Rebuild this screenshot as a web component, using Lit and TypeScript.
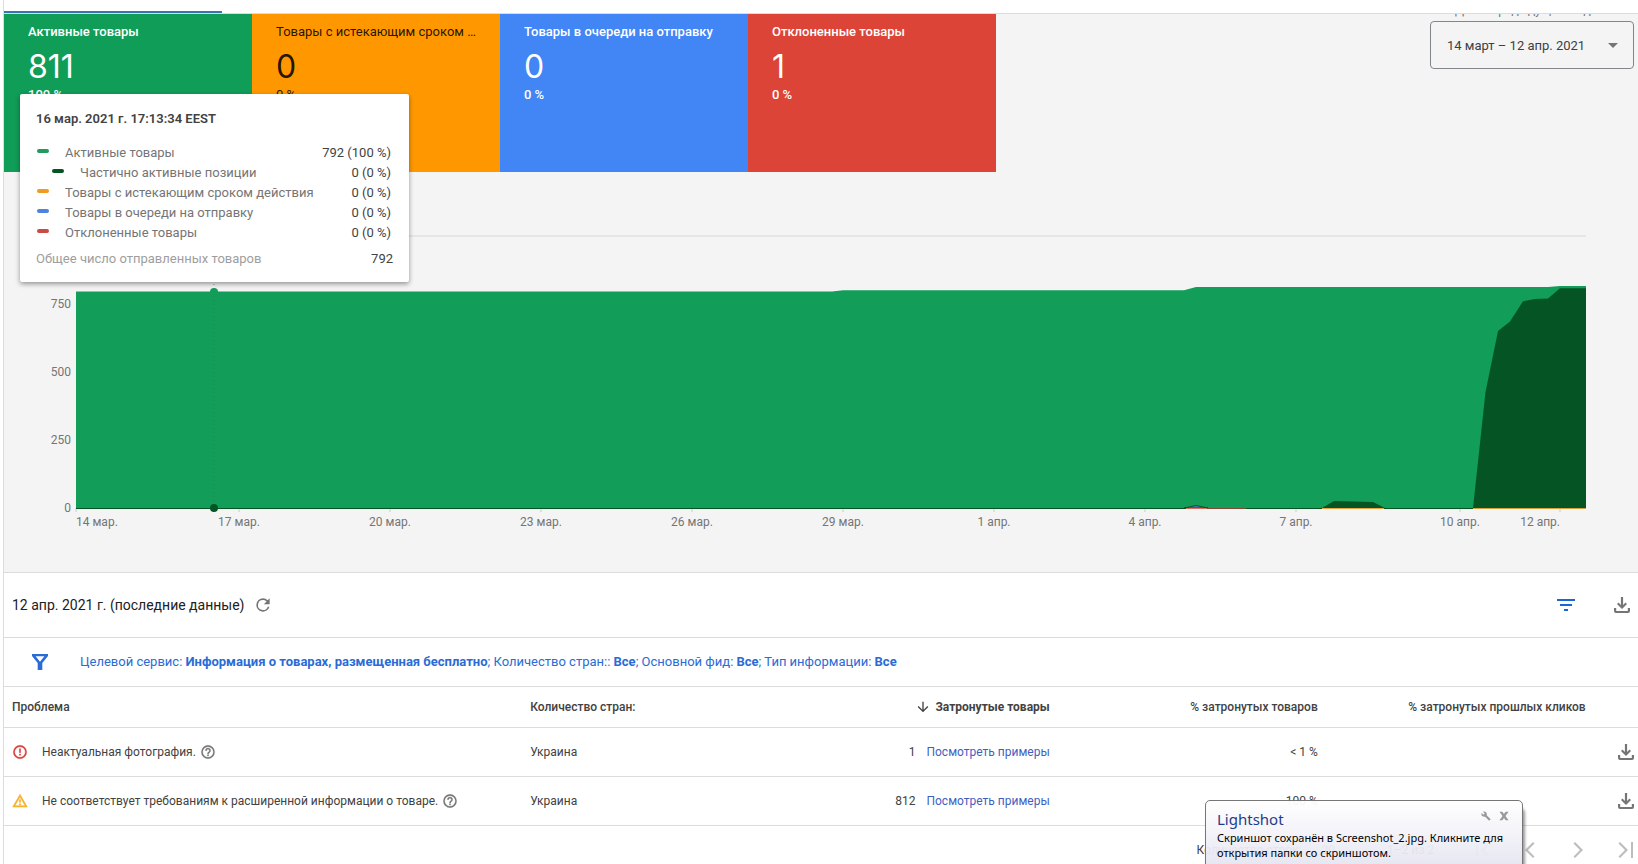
import { LitElement, html, css, svg } from "lit";
import { customElement, state } from "lit/decorators.js";

interface Tile { title: string; value: string; share: string; kind: string }
interface LegendRow { name: string; value: string; kind: string; nested?: boolean }
interface Issue { level: "error" | "warning"; name: string; country: string; count: string; share: string }

const TILES: Tile[] = [
  { title: "Активные товары", value: "811", share: "100 %", kind: "active" },
  { title: "Товары с истекающим сроком действия", value: "0", share: "0 %", kind: "expiring" },
  { title: "Товары в очереди на отправку", value: "0", share: "0 %", kind: "pending" },
  { title: "Отклоненные товары", value: "1", share: "0 %", kind: "disapproved" },
];

const LEGEND: LegendRow[] = [
  { name: "Активные товары", value: "792 (100 %)", kind: "active" },
  { name: "Частично активные позиции", value: "0 (0 %)", kind: "partial", nested: true },
  { name: "Товары с истекающим сроком действия", value: "0 (0 %)", kind: "expiring" },
  { name: "Товары в очереди на отправку", value: "0 (0 %)", kind: "pending" },
  { name: "Отклоненные товары", value: "0 (0 %)", kind: "disapproved" },
];

const ISSUES: Issue[] = [
  { level: "error", name: "Неактуальная фотография.", country: "Украина", count: "1", share: "< 1 %" },
  { level: "warning", name: "Не соответствует требованиям к расширенной информации о товаре.", country: "Украина", count: "812", share: "100 %" },
];

// Plot units: 1510 wide, 272 high for 1000 products.
const PLOT_W = 1510;
const X_TICKS: [number, string, string][] = [
  [0, "14 мар.", "start"],
  [163, "17 мар.", "middle"],
  [314, "20 мар.", "middle"],
  [465, "23 мар.", "middle"],
  [616, "26 мар.", "middle"],
  [767, "29 мар.", "middle"],
  [918, "1 апр.", "middle"],
  [1069, "4 апр.", "middle"],
  [1220, "7 апр.", "middle"],
  [1384, "10 апр.", "middle"],
  [1484, "12 апр.", "end"],
];
const HOVER_X = 138;
const pct = (x: number) => `${(x / PLOT_W) * 100}%`;

const ICONS = {
  refresh: svg`<path d="M17.65 6.35A7.96 7.96 0 0 0 12 4a8 8 0 1 0 7.73 10h-2.08A6 6 0 1 1 12 6c1.66 0 3.14.69 4.22 1.78L13 11h7V4z"/>`,
  filter: svg`<path d="M10 18h4v-2h-4zM3 6v2h18V6zm3 7h12v-2H6z"/>`,
  funnel: svg`<path d="M4 4h16v2l-5.700 7v7H9.700v-7L4 6zM7.600 6.300L12 11.800l4.400-5.500z" fill-rule="evenodd"/>`,
  download: svg`<path d="M4 15h2.200v3h11.600v-3H20v3a2 2 0 0 1-2 2H6a2 2 0 0 1-2-2zM17 11l-1.500-1.500-2.400 2.400V4h-2.200v7.900L8.500 9.500 7 11l5 5z"/>`,
  arrow: svg`<path d="M20 12l-1.410-1.410L13 16.170V4h-2v12.170l-5.580-5.590L4 12l8 8z"/>`,
  error: svg`<path d="M11 15h2v2h-2zm0-8h2v6h-2zm1-5a10 10 0 1 0 0 20 10 10 0 0 0 0-20zm0 18a8 8 0 1 1 0-16 8 8 0 0 1 0 16z" stroke="currentColor" stroke-width=".6"/>`,
  warning: svg`<path d="M12 5.990L19.530 19H4.470zM12 2L1 21h22zm1 14h-2v2h2zm0-6h-2v4h2z" stroke="currentColor" stroke-width=".8"/>`,
  help: svg`<path d="M11 18h2v-2h-2zm1-16a10 10 0 1 0 0 20 10 10 0 0 0 0-20zm0 18a8 8 0 1 1 0-16 8 8 0 0 1 0 16zm0-14a4 4 0 0 0-4 4h2a2 2 0 1 1 4 0c0 2-3 1.750-3 5h2c0-2.250 3-2.500 3-5a4 4 0 0 0-4-4z" stroke="currentColor" stroke-width=".4"/>`,
  first: svg`<path d="M18.410 16.590L13.820 12l4.590-4.590L17 6l-6 6 6 6zM6 6h2v12H6z"/>`,
  prev: svg`<path d="M16.500 5.500L15 4l-8 8 8 8 1.500-1.500L10 12z"/>`,
  next: svg`<path d="M9 4L7.500 5.500 14 12l-6.500 6.500L9 20l8-8z"/>`,
  last: svg`<path d="M6 4L4.500 5.500 11 12l-6.500 6.500L6 20l8-8zM17 4h2v16h-2z"/>`,
  wrench: svg`<path d="M22.700 19l-9.100-9.100c.9-2.300.4-5-1.500-6.900-2-2-5-2.400-7.400-1.300L9 6 6 9 1.600 4.700C.4 7.100.9 10.100 2.900 12.100c1.900 1.900 4.600 2.400 6.900 1.500l9.100 9.100c.4.4 1 .4 1.400 0l2.300-2.300c.5-.4.5-1.100.1-1.400z"/>`,
  close: svg`<path d="M1 2h7l4 5 4-5h7l-7.500 10 7.500 10h-7l-4-5-4 5H1l7.500-10z"/>`,
};
type IconName = keyof typeof ICONS;
const icon = (name: IconName, size = "s24") =>
  html`<svg class="icon ${size}" viewBox="0 0 24 24" aria-hidden="true">${ICONS[name]}</svg>`;

@customElement("status-tiles")
export class StatusTiles extends LitElement {
  static styles = css`
    :host { display: flex; flex: 0 1 992px; min-width: 0; }
    .tile {
      flex: 1 1 0; min-width: 0; height: 158px; box-sizing: border-box; padding: 8px 24px;
      border: 0; text-align: left; color: #fff; cursor: pointer;
      font: 500 13px/20px Roboto, sans-serif;
      display: flex; flex-direction: column; justify-content: flex-start;
    }
    .active { background: #109d58; }
    .expiring { background: #ff9800; color: rgba(0, 0, 0, .87); font-weight: 400; }
    .pending { background: #4285f4; }
    .disapproved { background: #db4437; }
    .title { display: block; max-width: 100%; white-space: nowrap; overflow: hidden; text-overflow: ellipsis; }
    .value { font-family: Inter, Roboto, sans-serif; font-size: 32px; line-height: 36px; font-weight: 400; padding-top: 7px; }
  `;
  render() {
    return TILES.map((t) => html`
      <button class="tile ${t.kind}" type="button">
        <span class="title">${t.title}</span>
        <span class="value">${t.value}</span>
        <span>${t.share}</span>
      </button>`);
  }
}

@customElement("history-chart")
export class HistoryChart extends LitElement {
  static styles = css`
    :host { display: block; }
    .chart { display: grid; grid-template-columns: 72px 1fr; margin-right: 52px; }
    .layer { display: block; width: 100%; height: 304px; overflow: visible; }
    text { font: 400 12px Roboto, sans-serif; fill: #757575; }
    .grid { stroke: #e6e6e6; stroke-width: 2; }
    .tick { stroke: #ccc; }
    .base { stroke: #055524; stroke-width: 1; }
    .active { fill: #129e59; }
    .partial { fill: #055524; }
    .hover { stroke: #3f6b50; stroke-dasharray: 1 3; opacity: .55; }
  `;
  render() {
    const labels = [[750, 72], [500, 140], [250, 208], [0, 276]];
    return html`
      <div class="chart">
        <svg class="layer" aria-hidden="true">
          ${labels.map(([v, y]) => svg`<text x="67" y=${y} text-anchor="end">${v}</text>`)}
        </svg>
        <svg class="layer" role="img" aria-label="Динамика статусов товаров">
          <line class="grid" x1="0" x2="100%" y1="0" y2="0"></line>
          ${X_TICKS.map(([x, , anchor]) => svg`<line class="tick" x1=${pct(x)} x2=${pct(x)} y1="272" y2="276"></line>`)}
          <svg width="100%" height="272" viewBox="0 0 1510 272" preserveAspectRatio="none">
            <polygon class="active" points="0,272 0,55.500 756,55.500 767,54.300 1108,54.300 1120,51 1472,51 1484,50 1510,50 1510,272"></polygon>
            <polygon class="partial" points="1246,272 1258,265 1297,266 1309,272"></polygon>
            <polygon class="partial" points="1397,272 1409.500,156 1422,95 1434,85.500 1447,65.300 1459,63 1472,62.500 1484,52.200 1510,52.200 1510,272"></polygon>
            <polygon fill="#5078c8" stroke="#055524" stroke-width="1" points="1108,272 1120,269.500 1132,272"></polygon>
          </svg>
          <line class="base" x1="0" x2="100%" y1="272.500" y2="272.500"></line>
          <line stroke="#d9705f" x1=${pct(1110)} x2=${pct(1131)} y1="272.500" y2="272.500"></line>
          <line stroke="#7d4a35" x1=${pct(1131)} x2=${pct(1170)} y1="272.500" y2="272.500"></line>
          <line stroke="#e9a640" x1=${pct(1246)} x2=${pct(1308)} y1="272.500" y2="272.500"></line>
          <line stroke="#d9a13c" x1=${pct(1397)} x2="100%" y1="272.500" y2="272.500"></line>
          <line class="hover" x1=${pct(HOVER_X)} x2=${pct(HOVER_X)} y1="48" y2="272"></line>
          <circle class="active" cx=${pct(HOVER_X)} cy="56" r="4"></circle>
          <circle class="partial" cx=${pct(HOVER_X)} cy="272" r="4"></circle>
          ${X_TICKS.map(([x, label, anchor]) => svg`<text x=${pct(x)} y="290" text-anchor=${anchor}>${label}</text>`)}
        </svg>
      </div>`;
  }
}

@customElement("point-tooltip")
export class PointTooltip extends LitElement {
  static styles = css`
    :host {
      display: block; box-sizing: border-box; padding: 15px 16px 13px; background: #fff; border-radius: 2px;
      box-shadow: 0 2px 5px rgba(0, 0, 0, .4); font: 400 13px/20px Roboto, sans-serif; color: #757575;
    }
    .when { margin: 0 0 14px; font-size: 13px; line-height: 20px; font-weight: 600; color: #424242; }
    .row { display: flex; align-items: center; padding-right: 2px; }
    .swatch { width: 12px; height: 4px; border-radius: 2px; margin: 0 16px 4px 1px; }
    .nested .swatch { margin-left: 16px; }
    .value { margin-left: auto; color: #424242; }
    .active { background: #219a5d; }
    .partial { background: #055524; }
    .expiring { background: #f09a1e; }
    .pending { background: #4c82e0; }
    .disapproved { background: #c94b41; }
    .total { display: flex; padding-top: 6px; color: #9e9e9e; }
  `;
  render() {
    return html`
      <h2 class="when">16 мар. 2021 г. 17:13:34 EEST</h2>
      ${LEGEND.map((r) => html`
        <div class="row ${r.nested ? "nested" : ""}">
          <span class="swatch ${r.kind}"></span><span>${r.name}</span><span class="value">${r.value}</span>
        </div>`)}
      <div class="total"><span>Общее число отправленных товаров</span><span class="value">792</span></div>`;
  }
}

@customElement("saved-toast")
export class SavedToast extends LitElement {
  static styles = css`
    :host {
      display: block; box-sizing: border-box; height: 72px; overflow: hidden; padding: 8px 10px 0 11px;
      border: 1px solid #767676; border-radius: 5px 5px 0 0;
      background: linear-gradient(#fffffff2, #e6e6f2f2 90%);
      box-shadow: 2px 8px 3px rgba(0, 0, 0, .4);
      font: 400 11px/15px "Noto Sans", sans-serif; color: #000;
    }
    .head { display: flex; align-items: flex-start; padding-right: 3px; }
    .title { margin: 0 auto 0 0; font-size: 15px; line-height: 21px; font-weight: 400; color: #1e3c8c; }
    button { border: 0; padding: 2px 0 0 8px; background: none; color: #999; line-height: 0; }
    .icon { width: 10px; height: 10px; fill: currentColor; }
    .text { margin: 0; }
  `;
  render() {
    return html`
      <div class="head">
        <h2 class="title">Lightshot</h2>
        <button type="button" aria-label="Настройки">${icon("wrench")}</button>
        <button type="button" aria-label="Закрыть">${icon("close")}</button>
      </div>
      <p class="text">Скриншот сохранён в Screenshot_2.jpg. Кликните для открытия папки со скриншотом.</p>`;
  }
}

@customElement("app-root")
export class AppRoot extends LitElement {
  @state() private toastOpen = true;

  static styles = css`
    :host { display: block; position: relative; height: 100vh; overflow: hidden; background: #fff; font: 400 13px/20px Roboto, sans-serif; color: #212121; }
    .page { margin-left: 3px; border-left: 1px solid #dcdcdc; min-height: 100vh; }
    .tabs { padding-top: 11px; border-bottom: 1px solid #dcdcdc; }
    .tab { width: 218px; height: 2px; background: #3b73b9; }
    .overview { background: #f4f4f4; border-bottom: 1px solid #dcdcdc; height: 558px; }
    .summary { display: flex; justify-content: space-between; gap: 24px; height: 222px; }
    .range { width: 204px; margin-right: 4px; }
    .range-label { display: block; height: 3px; overflow: hidden; margin: 0 0 4px 25px; font-size: 12px; color: #757575; }
    .range-label span { display: block; margin-top: -12px; line-height: 16px; white-space: nowrap; }
    .range-box { display: grid; align-items: center; }
    .range-box > * { grid-area: 1 / 1; }
    select {
      appearance: none; width: 100%; height: 48px; padding: 2px 16px 0; border: 1px solid #80868b; border-radius: 4px;
      background: none; color: #3c4043; font: 400 13px/20px Roboto, sans-serif;
    }
    .caret { justify-self: end; margin-right: 16px; border: 5px solid transparent; border-top-color: #757575; border-bottom: 0; pointer-events: none; }
    .icon { display: block; fill: currentColor; flex: none; }
    .s24 { width: 24px; height: 24px; }
    .s20 { width: 20px; height: 20px; }
    .s16 { width: 16px; height: 16px; }
    .ib { display: block; border: 0; padding: 0; background: none; color: #757575; cursor: pointer; }
    .toolbar { display: flex; align-items: center; height: 64px; padding: 0 4px 0 8px; border-bottom: 1px solid #dcdcdc; }
    .asof { margin: 0 8px 0 0; font-size: 14px; font-weight: 400; }
    .push { margin-left: auto; }
    .blue { color: #1a67d2; }
    .gap { margin-left: 32px; }
    .filters { display: flex; align-items: center; gap: 28px; height: 48px; padding-left: 24px; border-bottom: 1px solid #dcdcdc; color: #2a6bd6; }
    .filters p { margin: 0; }
    table { width: 100%; border-collapse: collapse; table-layout: fixed; font-size: 12px; color: #424242; }
    th, td { height: 48px; padding: 0; border-bottom: 1px solid #dcdcdc; text-align: right; font-weight: 400; }
    thead th, thead td { height: 40px; font-weight: 500; }
    .left { text-align: left; }
    .c1 { width: 32.200%; } .c2 { width: 18.600%; } .c3 { width: 13.200%; } .c4 { width: 16.400%; } .c5 { width: 16.400%; }
    .issue { display: flex; align-items: center; padding-left: 8px; }
    .issue .mark { margin-right: 14px; }
    .issue .help { margin-left: 4px; }
    thead .first { padding-left: 8px; }
    .error { color: #d93f3c; }
    .warning { color: #f5b22d; }
    .sorted { display: flex; align-items: center; gap: 4px; margin-left: auto; border: 0; padding: 0; background: none; font: inherit; font-weight: 700; color: inherit; }
    a { margin-left: 8px; color: #3f5fbf; text-decoration: none; }
    td .ib { margin-left: auto; }
    .pager { display: flex; align-items: center; justify-content: flex-end; height: 48px; color: #424242; font-size: 12px; }
    .pager .ib { color: #bdbdbd; margin-left: 24px; }
    .pager .ib:disabled { cursor: default; }
    .pager .size { margin: 0 52px 0 20px; }
    .pager .span { margin-right: 12px; }
    .tooltip { position: absolute; left: 20px; top: 94px; width: 389px; }
    .toast { position: absolute; right: 115px; bottom: -8px; width: 318px; }
  `;

  render() {
    return html`
      <main class="page">
        <div class="tabs"><div class="tab"></div></div>
        <section class="overview">
          <div class="summary">
            <status-tiles></status-tiles>
            <div class="range">
              <label class="range-label" for="range"><span>Даты: предыдущие 30 дней</span></label>
              <div class="range-box">
                <select id="range"><option>14 март – 12 апр. 2021</option></select>
                <span class="caret"></span>
              </div>
            </div>
          </div>
          <history-chart></history-chart>
        </section>
        <section>
          <div class="toolbar">
            <h1 class="asof">12 апр. 2021 г. (последние данные)</h1>
            <button class="ib" type="button" aria-label="Обновить">${icon("refresh", "s20")}</button>
            <button class="ib push blue" type="button" aria-label="Фильтры">${icon("filter")}</button>
            <button class="ib gap" type="button" aria-label="Скачать">${icon("download")}</button>
          </div>
          <div class="filters">
            ${icon("funnel")}
            <p>Целевой сервис: <b>Информация о товарах, размещенная бесплатно</b>; Количество стран:: <b>Все</b>; Основной фид: <b>Все</b>; Тип информации: <b>Все</b></p>
          </div>
          <table>
            <colgroup><col class="c1"><col class="c2"><col class="c3"><col class="c4"><col class="c5"><col></colgroup>
            <thead>
              <tr>
                <th class="left first" scope="col">Проблема</th>
                <th class="left" scope="col">Количество стран:</th>
                <th scope="col" aria-sort="descending"><button class="sorted" type="button">${icon("arrow", "s16")}Затронутые товары</button></th>
                <th scope="col">% затронутых товаров</th>
                <th scope="col">% затронутых прошлых кликов</th>
                <td></td>
              </tr>
            </thead>
            <tbody>
              ${ISSUES.map((i) => html`
                <tr>
                  <td class="left">
                    <div class="issue">
                      <span class="mark ${i.level}">${icon(i.level, "s16")}</span>${i.name}
                      <button class="ib help" type="button" aria-label="Справка">${icon("help", "s16")}</button>
                    </div>
                  </td>
                  <td class="left">${i.country}</td>
                  <td>${i.count} <a href="#examples">Посмотреть примеры</a></td>
                  <td>${i.share}</td>
                  <td></td>
                  <td><button class="ib" type="button" aria-label="Скачать">${icon("download")}</button></td>
                </tr>`)}
            </tbody>
          </table>
          <div class="pager">
            <span>Количество строк:</span><span class="size">20</span><span class="span">1–2 из 2</span>
            <button class="ib" type="button" disabled aria-label="Первая страница">${icon("first")}</button>
            <button class="ib" type="button" disabled aria-label="Предыдущая страница">${icon("prev")}</button>
            <button class="ib" type="button" disabled aria-label="Следующая страница">${icon("next")}</button>
            <button class="ib" type="button" disabled aria-label="Последняя страница">${icon("last")}</button>
          </div>
        </section>
      </main>
      <point-tooltip class="tooltip"></point-tooltip>
      ${this.toastOpen ? html`<saved-toast class="toast"></saved-toast>` : null}`;
  }
}
